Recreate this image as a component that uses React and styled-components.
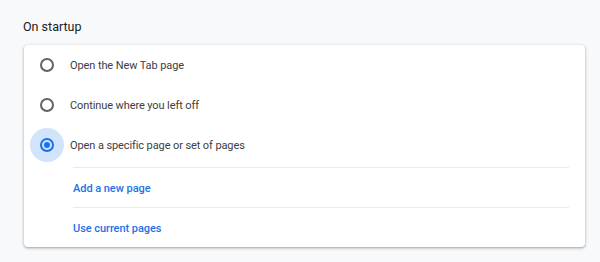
import React from 'react';
import styled, { createGlobalStyle } from 'styled-components';

const GlobalStyle = createGlobalStyle`
  html, body {
    margin: 0;
    padding: 0;
    background: #f8f9fa;
    font-family: Roboto, "Liberation Sans", sans-serif;
  }
`

const Page = styled.div`
  width: 600px;
  height: 262px;
  padding: 18px 15px 0 24px;
  box-sizing: border-box;
`

const Title = styled.h2`
  margin: 0 0 9px -1px;
  font-size: 12.5px;
  font-weight: 400;
  line-height: 18px;
  color: #202124;
`

const Card = styled.div`
  width: 561px;
  height: 202px;
  background: #fff;
  border-radius: 4px;
  box-shadow: 0 1px 2px rgba(60, 64, 67, 0.3), 0 1px 3px 1px rgba(60, 64, 67, 0.15);
  padding-right: 16px;
  box-sizing: border-box;
`

const Options = styled.div`
  display: flex;
  flex-direction: column;
`

const Option = styled.div`
  display: flex;
  align-items: center;
  height: 40px;
  padding-left: 16px;
`

const RadioWrap = styled.div`
  width: 14px;
  height: 14px;
  position: relative;
  margin-right: 16px;
  flex: none;
`

const Halo = styled.div`
  position: absolute;
  left: -10px;
  top: -10px;
  width: 34px;
  height: 34px;
  border-radius: 50%;
  background: #d2e3fc;
`

const Ring = styled.div`
  position: absolute;
  inset: 0;
  border-radius: 50%;
  border: 2px solid ${p => (p.$on ? '#1a73e8' : '#5f6368')};
  box-sizing: border-box;
  display: flex;
  align-items: center;
  justify-content: center;
`

const Dot = styled.div`
  width: 6px;
  height: 6px;
  border-radius: 50%;
  background: #1a73e8;
`

const Label = styled.span`
  font-size: 11px;
  color: #3c4043;
  letter-spacing: -0.1px;
`

const Links = styled.div`
  margin-top: 2px;
`

const LinkRow = styled.div`
  margin-left: 49px;
  height: 40px;
  padding-top: 1px;
  display: flex;
  align-items: center;
  border-top: 1px solid #e8eaed;
  box-sizing: border-box;
  color: #1a73e8;
  font-size: 11px;
  font-weight: 500;
  letter-spacing: -0.05px;
`

const Radio = ({ on }) => (
  <RadioWrap>
    {on && <Halo />}
    <Ring $on={on}>{on && <Dot />}</Ring>
  </RadioWrap>
)

export default function App() {
  return (
    <>
      <GlobalStyle />
      <Page>
        <Title>On startup</Title>
        <Card>
          <Options>
            <Option><Radio /><Label>Open the New Tab page</Label></Option>
            <Option><Radio /><Label>Continue where you left off</Label></Option>
            <Option><Radio on /><Label>Open a specific page or set of pages</Label></Option>
          </Options>
          <Links>
            <LinkRow>Add a new page</LinkRow>
            <LinkRow>Use current pages</LinkRow>
          </Links>
        </Card>
      </Page>
    </>
  )
}
